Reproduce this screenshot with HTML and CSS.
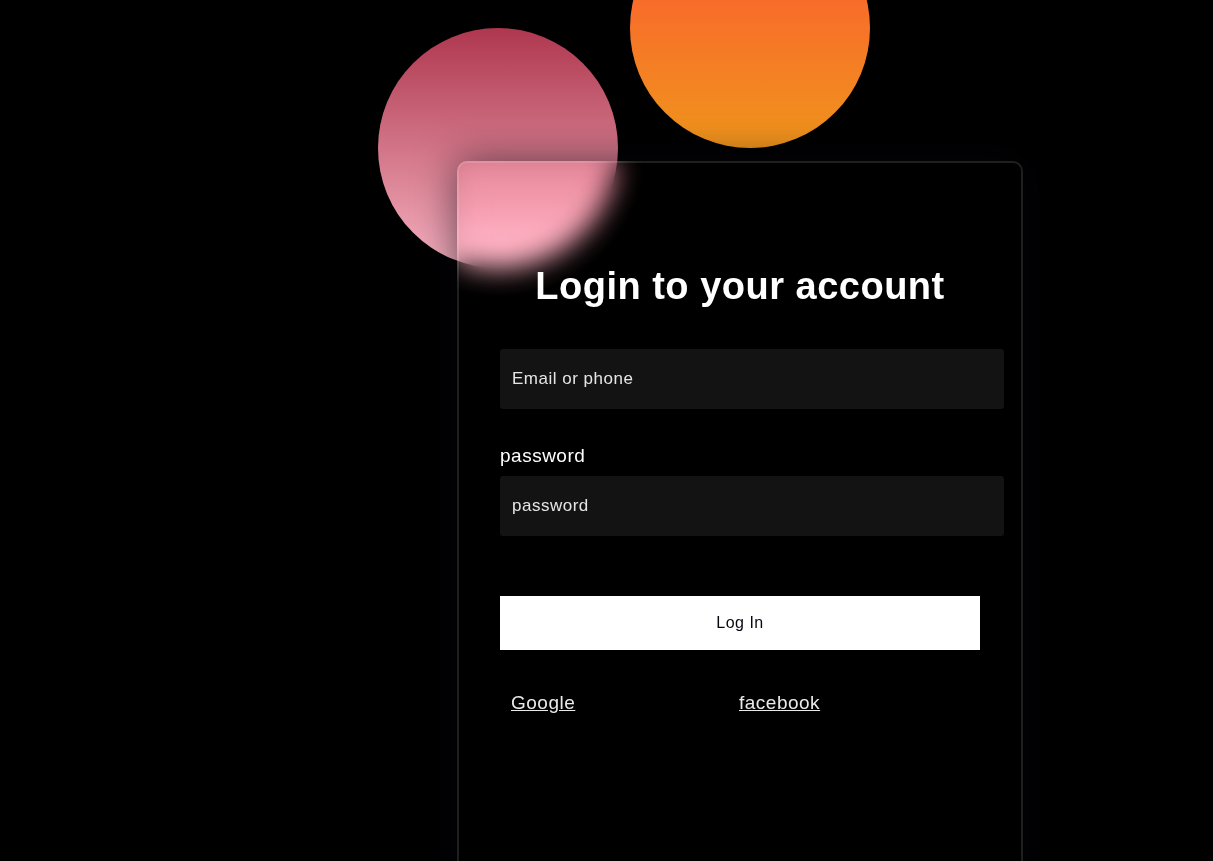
FILE: index.html
```html
<!DOCTYPE html>
<html lang="en">
<head>
<meta charset="utf-8">
<title>Login</title>
<link rel="stylesheet" href="styles.css">
</head>
<body>
<div class="background">
  <div class="shape shape-pink"></div>
  <div class="shape shape-orange"></div>
</div>
<form class="login-card">
  <h3 class="login-title">Login to your account</h3>
  <input class="field" type="text" placeholder="Email or phone" id="username">
  <label class="field-label" for="password">password</label>
  <input class="field field-password" type="password" placeholder="password" id="password">
  <button class="login-button" type="button">Log In</button>
  <div class="social">
    <a class="social-link" href="#">Google</a>
    <a class="social-link" href="#">facebook</a>
  </div>
</form>
</body>
</html>
```

FILE: styles.css
```css
* {
  margin: 0;
  padding: 0;
}

html, body {
  height: 100%;
  overflow: hidden;
}

body {
  background: #000000;
  font-family: "Liberation Sans", Arial, sans-serif;
  padding: 161px 0 0 457px;
  box-sizing: border-box;
}

.background {
  position: absolute;
  left: 0;
  top: 0;
  width: 100%;
  height: 100%;
}

.shape {
  position: absolute;
  width: 240px;
  height: 240px;
  border-radius: 50%;
}

.shape-pink {
  left: 378px;
  top: 28px;
  background: linear-gradient(#ae374e, #f6b2c1);
}

.shape-orange {
  left: 630px;
  top: -92px;
  background: linear-gradient(#fd5333, #f0951c);
}

.login-card {
  position: relative;
  width: 566px;
  min-height: 760px;
  box-sizing: border-box;
  padding: 102px 41px 0;
  border: 2px solid rgba(255, 255, 255, 0.12);
  border-radius: 10px;
  background-color: rgba(0, 0, 0, 0.02);
  backdrop-filter: blur(14px) brightness(1.1);
  -webkit-backdrop-filter: blur(14px) brightness(1.1);
  box-shadow: 0 0 40px rgba(8, 7, 16, 0.6);
  display: flex;
  flex-direction: column;
  align-items: flex-start;
}

.login-card * {
  font-family: "Liberation Sans", Arial, sans-serif;
  letter-spacing: 0.5px;
  color: #ffffff;
  outline: none;
  border: none;
}

.login-title {
  align-self: stretch;
  font-size: 38px;
  font-weight: 700;
  line-height: 42px;
  text-align: center;
}

.field {
  display: block;
  box-sizing: content-box;
  width: 100%;
  height: 60px;
  padding: 0 12px;
  margin-top: 42px;
  background-color: rgba(255, 255, 255, 0.075);
  border-radius: 3px;
  font-size: 17px;
  color: #e5e5e5;
}

.field::placeholder {
  color: #e5e5e5;
}

.field-label {
  display: block;
  margin-top: 36px;
  font-size: 19px;
  line-height: 22px;
  font-weight: 500;
}

.field-password {
  margin-top: 9px;
}

.login-button {
  margin-top: 60px;
  width: 100%;
  height: 54px;
  background-color: #ffffff;
  color: #080710;
  font-size: 16px;
  font-weight: 400;
  cursor: pointer;
}

.social {
  margin-top: 42px;
  display: flex;
  padding-left: 11px;
}

.social-link {
  width: 228px;
  font-size: 19px;
  line-height: 22px;
  color: #eaeaea;
  text-decoration: underline;
}
```
